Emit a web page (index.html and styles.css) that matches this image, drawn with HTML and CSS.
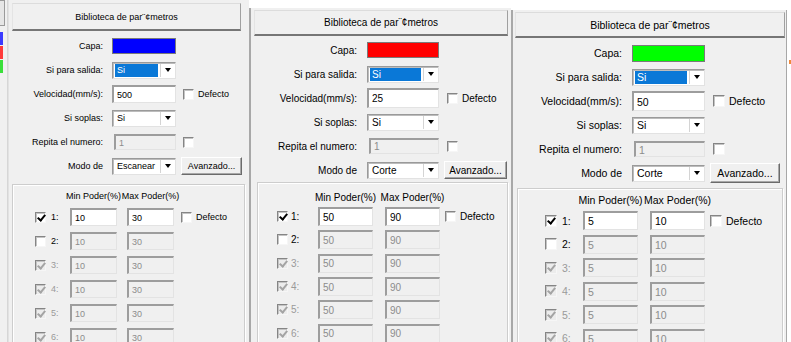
FILE: index.html
```html
<!DOCTYPE html>
<html lang="es">
<head>
<meta charset="UTF-8">
<meta name="viewport" content="width=device-width, initial-scale=1.0">
<title>Biblioteca de parámetros</title>
<link rel="stylesheet" href="styles.css">
</head>
<body>
    <div class="shots">

        <div class="edge">
            <div class="edge-box"></div>
            <div class="edge-swatch blue"></div>
            <div class="edge-swatch red"></div>
            <div class="edge-swatch green"></div>
        </div>

        <!-- capa azul -->
        <section class="panel panel-a">
            <div class="lib-btn">Biblioteca de par¨¢metros</div>
            <div class="form">
                <span class="lbl">Capa:</span>
                <span class="swatch blue"></span>

                <span class="lbl">Si para salida:</span>
                <div class="combo"><span class="combo-text hl">Si</span><span class="combo-arrow"></span></div>

                <span class="lbl">Velocidad(mm/s):</span>
                <div class="field">500</div>
                <div class="opt"><span class="chk"></span>Defecto</div>

                <span class="lbl">Si soplas:</span>
                <div class="combo"><span class="combo-text">Si</span><span class="combo-arrow"></span></div>

                <span class="lbl">Repita el numero:</span>
                <div class="field short off">1</div>
                <div class="opt"><span class="chk"></span></div>

                <span class="lbl">Modo de</span>
                <div class="combo"><span class="combo-text">Escanear</span><span class="combo-arrow"></span></div>
                <div class="btn">Avanzado...</div>
            </div>

            <div class="group">
                <div class="power">
                    <span class="col-head min">Min Poder(%)</span>
                    <span class="col-head max">Max Poder(%)</span>

                    <span class="chk on pw"></span><span class="num">1:</span>
                    <div class="field in">10</div><div class="field in">30</div>
                    <div class="opt"><span class="chk"></span>Defecto</div>

                    <span class="chk pw"></span><span class="num">2:</span>
                    <div class="field in off">10</div><div class="field in off">30</div>

                    <span class="chk on dim pw"></span><span class="num dim">3:</span>
                    <div class="field in off">10</div><div class="field in off">30</div>

                    <span class="chk on dim pw"></span><span class="num dim">4:</span>
                    <div class="field in off">10</div><div class="field in off">30</div>

                    <span class="chk on dim pw"></span><span class="num dim">5:</span>
                    <div class="field in off">10</div><div class="field in off">30</div>

                    <span class="chk on dim pw"></span><span class="num dim">6:</span>
                    <div class="field in off">10</div><div class="field in off">30</div>
                </div>
            </div>
        </section>

        <!-- capa roja -->
        <section class="panel panel-b">
            <div class="lib-btn">Biblioteca de par¨¢metros</div>
            <div class="form">
                <span class="lbl">Capa:</span>
                <span class="swatch red"></span>

                <span class="lbl">Si para salida:</span>
                <div class="combo"><span class="combo-text hl">Si</span><span class="combo-arrow"></span></div>

                <span class="lbl">Velocidad(mm/s):</span>
                <div class="field">25</div>
                <div class="opt"><span class="chk"></span>Defecto</div>

                <span class="lbl">Si soplas:</span>
                <div class="combo"><span class="combo-text">Si</span><span class="combo-arrow"></span></div>

                <span class="lbl">Repita el numero:</span>
                <div class="field short off">1</div>
                <div class="opt"><span class="chk"></span></div>

                <span class="lbl">Modo de</span>
                <div class="combo"><span class="combo-text">Corte</span><span class="combo-arrow"></span></div>
                <div class="btn">Avanzado...</div>
            </div>

            <div class="group">
                <div class="power">
                    <span class="col-head min">Min Poder(%)</span>
                    <span class="col-head max">Max Poder(%)</span>

                    <span class="chk on pw"></span><span class="num">1:</span>
                    <div class="field in">50</div><div class="field in">90</div>
                    <div class="opt"><span class="chk"></span>Defecto</div>

                    <span class="chk pw"></span><span class="num">2:</span>
                    <div class="field in off">50</div><div class="field in off">90</div>

                    <span class="chk on dim pw"></span><span class="num dim">3:</span>
                    <div class="field in off">50</div><div class="field in off">90</div>

                    <span class="chk on dim pw"></span><span class="num dim">4:</span>
                    <div class="field in off">50</div><div class="field in off">90</div>

                    <span class="chk on dim pw"></span><span class="num dim">5:</span>
                    <div class="field in off">50</div><div class="field in off">90</div>

                    <span class="chk on dim pw"></span><span class="num dim">6:</span>
                    <div class="field in off">50</div><div class="field in off">90</div>
                </div>
            </div>
        </section>

        <!-- capa verde -->
        <section class="panel panel-c">
            <div class="lib-btn">Biblioteca de par¨¢metros</div>
            <div class="form">
                <span class="lbl">Capa:</span>
                <span class="swatch green"></span>

                <span class="lbl">Si para salida:</span>
                <div class="combo"><span class="combo-text hl">Si</span><span class="combo-arrow"></span></div>

                <span class="lbl">Velocidad(mm/s):</span>
                <div class="field">50</div>
                <div class="opt"><span class="chk"></span>Defecto</div>

                <span class="lbl">Si soplas:</span>
                <div class="combo"><span class="combo-text">Si</span><span class="combo-arrow"></span></div>

                <span class="lbl">Repita el numero:</span>
                <div class="field short off">1</div>
                <div class="opt"><span class="chk"></span></div>

                <span class="lbl">Modo de</span>
                <div class="combo"><span class="combo-text">Corte</span><span class="combo-arrow"></span></div>
                <div class="btn">Avanzado...</div>
            </div>

            <div class="group">
                <div class="power">
                    <span class="col-head min">Min Poder(%)</span>
                    <span class="col-head max">Max Poder(%)</span>

                    <span class="chk on pw"></span><span class="num">1:</span>
                    <div class="field in">5</div><div class="field in">10</div>
                    <div class="opt"><span class="chk"></span>Defecto</div>

                    <span class="chk pw"></span><span class="num">2:</span>
                    <div class="field in off">5</div><div class="field in off">10</div>

                    <span class="chk on dim pw"></span><span class="num dim">3:</span>
                    <div class="field in off">5</div><div class="field in off">10</div>

                    <span class="chk on dim pw"></span><span class="num dim">4:</span>
                    <div class="field in off">5</div><div class="field in off">10</div>

                    <span class="chk on dim pw"></span><span class="num dim">5:</span>
                    <div class="field in off">5</div><div class="field in off">10</div>

                    <span class="chk on dim pw"></span><span class="num dim">6:</span>
                    <div class="field in off">5</div><div class="field in off">10</div>
                </div>
            </div>
        </section>

        <div class="edge-right"><span class="mark"></span></div>
    </div>
</body>
</html>
```

FILE: styles.css
```css
* {
    box-sizing: border-box;
}

body {
    margin: 0;
    background-color: #fff;
    font-family: "Liberation Sans", Arial, sans-serif;
    color: #000;
}

.shots {
    display: flex;
    align-items: flex-start;
    height: 342px;
    overflow: hidden;
}

/* strip of the window on the left */
.edge {
    width: 8px;
    height: 342px;
    flex: none;
    background-color: #f0f0f0;
    border-right: 1px solid #d6d6d6;
    display: flex;
    flex-direction: column;
}

.edge-box {
    width: 5px;
    height: 26px;
    background-color: #e6e6e6;
    border: 1px solid #9a9a9a;
    border-left: none;
    margin-bottom: 6px;
}

.edge-swatch {
    width: 3px;
    height: 13px;
    margin-bottom: 1px;
}

.edge-swatch.blue { background-color: #3a3aff; }
.edge-swatch.red { background-color: #ff3a3a; }
.edge-swatch.green { background-color: #3adf3a; }

.edge-right {
    width: 4px;
    flex: none;
    padding-top: 60px;
}

.mark {
    display: block;
    width: 2px;
    height: 4px;
    margin-left: 2px;
    background-color: #f08a3c;
}

/* panels */
.panel {
    flex: none;
    background-color: #f0f0f0;
    font-size: var(--fs);
    display: flex;
    flex-direction: column;
    overflow: hidden;
}

.panel-a {
    width: 241px;
    height: 342px;
    border-left: 1px solid #e2e2e2;
    --fs: 9px;
    --bm: 3px 8px 0 3px;
    --bh: 28px;
    --ft: 3px;
    --lab: 94px;
    --gap: 9px;
    --ctl: 64px;
    --sh: 16px;
    --ch: 17px;
    --fh: 18px;
    --cb: 11px;
    --bw: 61px;
    --bth: 18px;
    --gm: 6px 4px 0 3px;
    --gp: 2px 0 0 22px;
    --ph: 18px;
    --prow: 24px;
    --tracks: 16px 19px 57px 56px auto;
    --in: 47px;
    --ih: 18px;
}

.panel-b {
    width: 262px;
    height: 334px;
    margin-top: 8px;
    border-left: 2px solid #a8a8a8;
    --fs: 10px;
    --bm: 2px 3px 0 3px;
    --bh: 26px;
    --ft: 2px;
    --lab: 106px;
    --gap: 10px;
    --ctl: 72px;
    --sh: 16px;
    --ch: 17px;
    --fh: 20px;
    --cb: 11px;
    --bw: 63px;
    --bth: 18px;
    --gm: 0 3px 0 6px;
    --gp: 6px 0 0 19px;
    --ph: 16px;
    --prow: 23.3px;
    --tracks: 14px 27px 67px 62px auto;
    --in: 55px;
    --ih: 19px;
}

.panel-c {
    width: 276px;
    height: 332px;
    margin-top: 10px;
    border-left: 2px solid #a8a8a8;
    border-right: 1px solid #a8a8a8;
    --fs: 10.5px;
    --bm: 2px 1px 0 2px;
    --bh: 26px;
    --ft: 3px;
    --lab: 109px;
    --gap: 10px;
    --ctl: 73px;
    --sh: 17px;
    --ch: 17px;
    --fh: 20px;
    --cb: 12px;
    --bw: 70px;
    --bth: 20px;
    --gm: 3px 3px 0 4px;
    --gp: 2px 0 0 27px;
    --ph: 18px;
    --prow: 23.5px;
    --tracks: 17px 21px 67px 62px auto;
    --in: 55px;
    --ih: 19px;
}

.lib-btn {
    flex: none;
    margin: var(--bm);
    height: var(--bh);
    display: flex;
    align-items: center;
    justify-content: center;
    background-color: #f0f0f0;
    border-top: 1px solid #dcdcdc;
    border-left: 1px solid #e4e4e4;
    border-right: 1px solid #a0a0a0;
    border-bottom: 2px solid #767676;
    white-space: nowrap;
}

/* upper form */
.form {
    display: grid;
    grid-template-columns: var(--lab) var(--ctl) auto;
    column-gap: var(--gap);
    grid-auto-rows: 24px;
    align-items: center;
    margin-top: var(--ft);
}

.lbl {
    grid-column: 1;
    text-align: right;
    white-space: nowrap;
}

.swatch {
    height: var(--sh);
    border: 1px solid #7a7a7a;
}

.swatch.blue { background-color: #0000ff; }
.swatch.red { background-color: #ff0000; }
.swatch.green { background-color: #00ff00; }

.combo {
    display: flex;
    height: var(--ch);
    background-color: #fff;
    border: 1px solid;
    border-color: #9a9a9a #e2e2e2 #e2e2e2 #9a9a9a;
    box-shadow: inset 1px 1px 0 #bcbcbc;
    padding: 1px 1px 1px 2px;
}

.combo-text {
    flex: 1;
    display: flex;
    align-items: center;
    padding-left: 2px;
    white-space: nowrap;
}

.combo-text.hl {
    background-color: #0a78d7;
    color: #fff;
    margin-right: 2px;
}

.combo-arrow {
    width: 14px;
    display: flex;
    align-items: center;
    justify-content: center;
    border-left: 1px solid #d4d4d4;
    background-color: #fff;
}

.combo-arrow::before {
    content: "";
    border-left: 3px solid transparent;
    border-right: 3px solid transparent;
    border-top: 4px solid #000;
}

.field {
    height: var(--fh);
    display: flex;
    align-items: center;
    padding-left: 3px;
    background-color: #fff;
    border-style: solid;
    border-width: 2px 1px 1px 2px;
    border-color: #9d9d9d #e3e3e3 #e3e3e3 #9d9d9d;
    white-space: nowrap;
}

.field.short {
    height: 16px;
    margin-left: 2px;
}

.field.off {
    background-color: #f0f0f0;
    color: #8c8c8c;
}

.opt {
    display: flex;
    align-items: center;
    gap: 4px;
    margin-left: -2px;
    white-space: nowrap;
}

.chk {
    flex: none;
    position: relative;
    width: var(--cb);
    height: var(--cb);
    background-color: #fff;
    border: 1px solid;
    border-color: #858585 #f6f6f6 #f6f6f6 #858585;
    box-shadow: inset 1px 1px 0 #c4c4c4;
}

.chk.on::after {
    content: "";
    position: absolute;
    left: 3px;
    top: 0;
    width: 3px;
    height: 6px;
    border: solid #000;
    border-width: 0 2px 2px 0;
    transform: rotate(40deg);
}

.chk.dim {
    background-color: #ececec;
}

.chk.dim::after {
    border-color: #a4a4a4;
}

.btn {
    width: var(--bw);
    height: var(--bth);
    margin-left: -5px;
    display: flex;
    align-items: center;
    justify-content: center;
    background-color: #f0f0f0;
    border: 1px solid;
    border-color: #fff #6b6b6b #6b6b6b #fff;
    box-shadow: inset -1px -1px 0 #a8a8a8;
    white-space: nowrap;
}

.panel-a .btn {
    margin-left: -4px;
}

/* power group */
.group {
    flex: 1;
    margin: var(--gm);
    padding: var(--gp);
    border: 1px solid #cdcdcd;
    box-shadow: inset 1px 1px 0 #fff, 1px 1px 0 #fff;
}

.power {
    display: grid;
    grid-template-columns: var(--tracks);
    grid-template-rows: var(--ph);
    grid-auto-rows: var(--prow);
    align-items: center;
}

.col-head {
    width: var(--in);
    display: flex;
    justify-content: center;
    white-space: nowrap;
}

.col-head.min { grid-column: 3; }
.col-head.max { grid-column: 4; }

.chk.pw {
    grid-column: 1;
}

.num.dim {
    color: #9a9a9a;
}

.field.in {
    width: var(--in);
    height: var(--ih);
}
```
